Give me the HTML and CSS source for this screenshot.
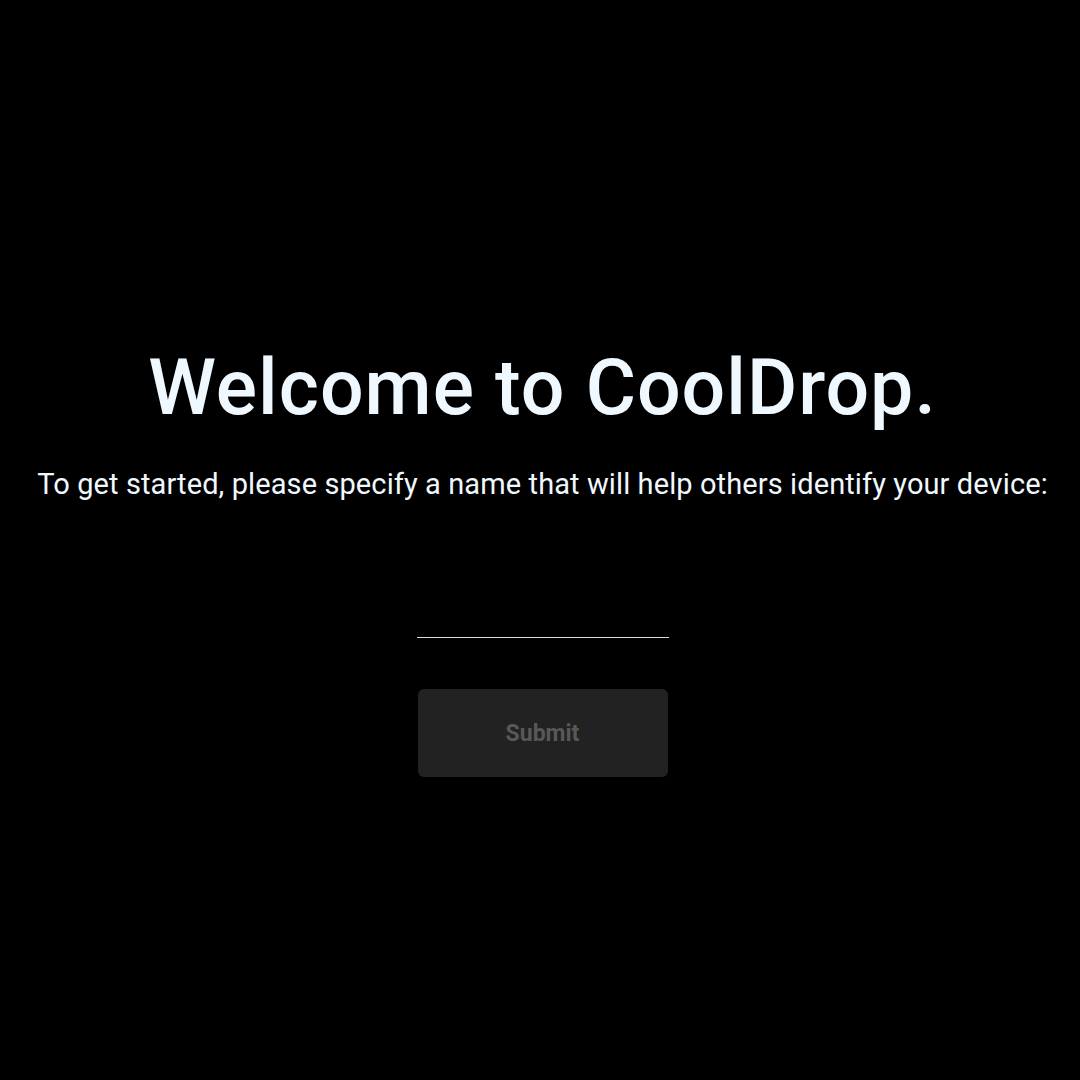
FILE: index.html
```html
<!DOCTYPE html>
<html>
<head>
<meta charset="utf-8">
<link rel="stylesheet" href="styles.css">
</head>
<body>
<main class="page">
  <h1 class="title">Welcome to CoolDrop.</h1>
  <p class="subtitle">To get started, please specify a name that will help others identify your device:</p>
  <input class="name-input" type="text" aria-label="Device name">
  <button class="submit" disabled>Submit</button>
</main>
</body>
</html>
```

FILE: styles.css
```css
html, body {
  margin: 0;
  padding: 0;
  background: #000;
  height: 100%;
}
body {
  font-family: Roboto, "Liberation Sans", sans-serif;
  color: #f0f8ff;
}
.page {
  height: 100%;
  display: flex;
  flex-direction: column;
  align-items: center;
  padding-top: 338px;
  padding-left: 5px;
  box-sizing: border-box;
}
.title {
  margin: 0;
  font-size: 77px;
  font-weight: 500;
  line-height: 100px;
  letter-spacing: 1px;
}
.subtitle {
  margin: 28px 0 0;
  font-size: 29px;
  line-height: 36px;
  font-weight: 400;
  letter-spacing: 0.1px;
  white-space: nowrap;
}
.name-input {
  margin-top: 100px;
  width: 252px;
  height: 36px;
  background: transparent;
  border: none;
  border-bottom: 1px solid #dcdcdc;
  outline: none;
  color: #f0f8ff;
  font-family: inherit;
  font-size: 22px;
  box-sizing: border-box;
}
.submit {
  margin-top: 51px;
  width: 250px;
  height: 88px;
  background: #222;
  border: none;
  border-radius: 6px;
  color: #585858;
  font-family: inherit;
  font-weight: 700;
  font-size: 23px;
}
```
